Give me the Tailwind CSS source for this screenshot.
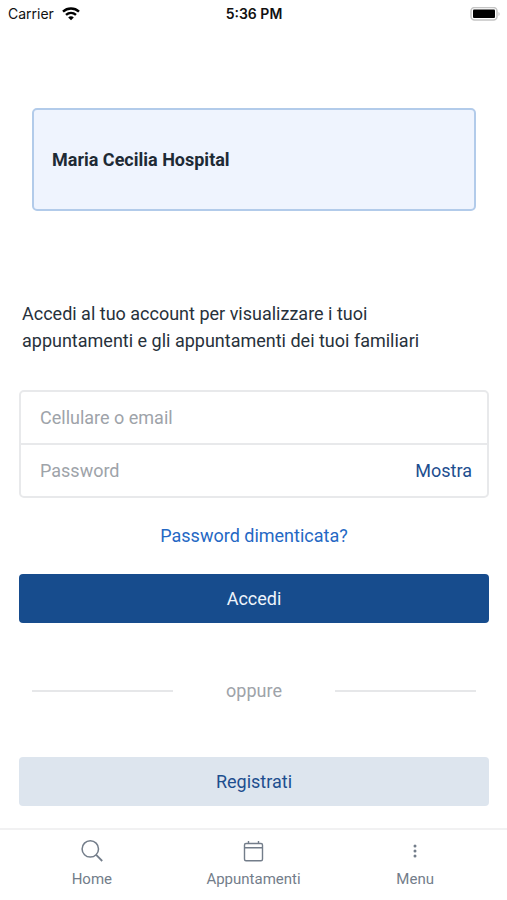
<!DOCTYPE html>
<html lang="it">
<head>
<meta charset="utf-8">
<meta name="viewport" content="width=device-width, initial-scale=1">
<title>Accedi</title>
<script src="https://cdn.jsdelivr.net/npm/@tailwindcss/browser@4"></script>
</head>
<body class="min-h-screen flex flex-col bg-white font-[Roboto,sans-serif] text-lg text-[#27313b]">
  <header class="grid grid-cols-3 items-center h-7 pl-2 pr-[7px] font-[Inter,sans-serif] text-sm text-[#111]">
    <div class="flex items-center gap-2">
      <span>Carrier</span>
      <svg class="w-[18px] h-[14px]" viewBox="0 0 18 14" fill="none" stroke="#000" stroke-width="2.4" aria-hidden="true">
        <path d="M1 4.600C5.500 .4 12.500 .4 17 4.600"/>
        <path d="M4 7.900C7 5.200 11 5.200 14 7.900"/>
        <path d="M9 13.200 6.200 10.400C7.800 9 10.200 9 11.800 10.400Z" fill="#000" stroke="none"/>
      </svg>
    </div>
    <span class="text-center font-semibold">5:36 PM</span>
    <svg class="justify-self-end w-[30px] h-[14px]" viewBox="0 0 30 14" aria-hidden="true">
      <rect x="1" y=".5" width="26" height="12.500" rx="3.500" fill="#fff" stroke="#c4c4c4" stroke-width="1.500"/>
      <rect x="3" y="2.500" width="22" height="8.500" rx="1" fill="#000"/>
      <path d="M28.500 5v4c1.500-.5 1.500-3.500 0-4Z" fill="#bdbdbd"/>
    </svg>
  </header>

  <main class="flex-1 flex flex-col pl-[19px] pr-[18px] pt-20 pb-5">
    <section class="mx-[13px] flex items-center h-[103px] px-[18px] rounded-[5px] border-2 border-[#b2cbea] bg-[#eff4fe]">
      <h1 class="font-bold text-[#1e2a35]">Maria Cecilia Hospital</h1>
    </section>

    <p class="mt-[89px] px-[3px] leading-[27px]">Accedi al tuo account per visualizzare i tuoi<br>appuntamenti e gli appuntamenti dei tuoi familiari</p>

    <form class="mt-9 flex flex-col">
      <div class="rounded-[5px] border-2 border-[#e8e9eb]">
        <input type="text" aria-label="Cellulare o email" placeholder="Cellulare o email" class="block w-full h-[51px] px-[19px] outline-none placeholder:text-[#9ea3a9]">
        <div class="flex items-center h-[53px] border-t-2 border-[#e8e9eb]">
          <input type="password" aria-label="Password" placeholder="Password" class="flex-1 min-w-0 h-full px-[19px] outline-none placeholder:text-[#9ea3a9]">
          <button type="button" class="px-[15px] text-[#1d4e8f]">Mostra</button>
        </div>
      </div>
      <a href="#" class="self-center mt-6 leading-7 text-[#2468c4]">Password dimenticata?</a>
      <button type="submit" class="mt-6 h-[49px] rounded-[4px] bg-[#174c8d] text-[#eef4fc]">Accedi</button>
    </form>

    <div class="mt-[54px] mx-[13px] flex items-center h-7 text-[#9ea3a9]">
      <span class="flex-1 h-[2px] bg-[#e6e7e9]"></span>
      <span class="w-[162px] text-center">oppure</span>
      <span class="flex-1 h-[2px] bg-[#e6e7e9]"></span>
    </div>

    <button type="button" class="mt-[52px] h-[49px] rounded-[4px] bg-[#dde5ee] text-[#1d4e8f]">Registrati</button>
  </main>

  <nav class="grid grid-cols-3 h-[72px] px-[11px] pt-[9px] border-t-2 border-[#f1f1f2] text-[15px] leading-5 text-[#737d8a]">
    <a href="#" class="flex flex-col items-center gap-[6px]">
      <svg class="size-6" viewBox="0 0 24 24" fill="none" stroke="currentColor" stroke-width="1.500" aria-hidden="true">
        <circle cx="10.300" cy="9.900" r="8.200"/><path d="M16.200 15.800 22.200 22" stroke-width="1.800"/>
      </svg>
      <span>Home</span>
    </a>
    <a href="#" class="flex flex-col items-center gap-[6px]">
      <svg class="size-6" viewBox="0 0 24 24" fill="none" stroke="currentColor" stroke-width="1.400" aria-hidden="true">
        <rect x="3.500" y="4.500" width="18" height="17.300" rx="1.500"/><path d="M3.500 8.800h18M7.500 2v2.500M17.500 2v2.500"/>
      </svg>
      <span>Appuntamenti</span>
    </a>
    <a href="#" class="flex flex-col items-center gap-[6px]">
      <svg class="size-6" viewBox="0 0 24 24" fill="currentColor" aria-hidden="true">
        <circle cx="12" cy="7" r="1.500"/><circle cx="12" cy="12" r="1.500"/><circle cx="12" cy="17" r="1.500"/>
      </svg>
      <span>Menu</span>
    </a>
  </nav>
</body>
</html>
